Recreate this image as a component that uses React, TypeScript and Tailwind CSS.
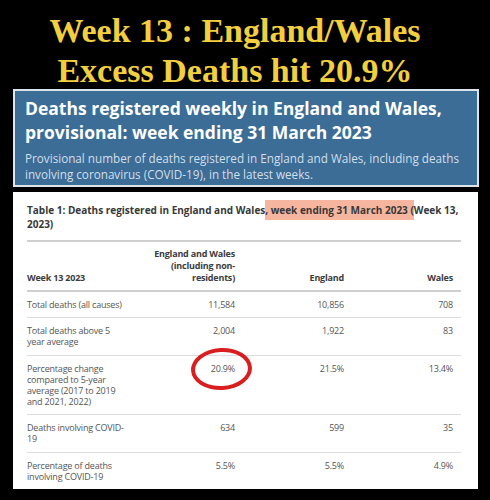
import React from "react";

const rows: { label: string; a: string; b: string; c: string; circle?: boolean }[] = [
  { label: "Total deaths (all causes)", a: "11,584", b: "10,856", c: "708" },
  { label: "Total deaths above 5 year average", a: "2,004", b: "1,922", c: "83" },
  {
    label: "Percentage change compared to 5-year average (2017 to 2019 and 2021, 2022)",
    a: "20.9%",
    b: "21.5%",
    c: "13.4%",
    circle: true,
  },
  { label: "Deaths involving COVID-19", a: "634", b: "599", c: "35" },
  { label: "Percentage of deaths involving COVID-19", a: "5.5%", b: "5.5%", c: "4.9%" },
];

export default function App() {
  return (
    <div className="w-[490px] h-[500px] bg-black flex flex-col overflow-hidden">
      <div
        className="pt-[10.5px] pr-[20px] text-center text-[34px] leading-[40px] font-bold text-[#f2cf3e]"
        style={{ fontFamily: '"Liberation Serif", serif' }}
      >
        <div>Week 13 : England/Wales</div>
        <div>Excess Deaths hit 20.9%</div>
      </div>

      <div
        className="mt-[-1.5px] ml-[13px] mr-[11px] h-[98px] bg-[#3b6d97] border-2 border-[#dde5ec] pl-[10px] pr-[6px] pt-[5px]"
        style={{ fontFamily: '"Open Sans", sans-serif' }}
      >
        <div className="text-white font-bold text-[17.5px] leading-[24px]">
          Deaths registered weekly in England and Wales, provisional: week ending 31 March 2023
        </div>
        <div className="mt-[5.5px] text-[#d3dfe9] text-[11.7px] leading-[16px]">
          Provisional number of deaths registered in England and Wales, including deaths involving
          coronavirus (COVID-19), in the latest weeks.
        </div>
      </div>

      <div
        className="mt-[5px] ml-[13px] mr-[12px] h-[297px] bg-white pl-[14px] pr-[17px] pt-[11px]"
        style={{ fontFamily: '"Open Sans", sans-serif' }}
      >
        <div className="text-[10px] leading-[14px] font-bold text-[#383838]">
          Table 1: Deaths registered in England and Wales
          <span className="bg-[#f6b59f] py-[3px]">, week ending 31 March 2023 (</span>
          Week 13, 2023)
        </div>
        <div className="mt-[8.5px] h-[2px] bg-[#cfcfcf]" />

        <div className="grid grid-cols-[100px_116px_109px_109px] text-[9px] tracking-[-0.2px] leading-[12px] font-bold text-[#3c3c3c] items-end pt-[6.5px] pb-[5.5px]">
          <div>Week 13 2023</div>
          <div className="text-right pr-[8px] pl-[24px]">England and Wales (including non-residents)</div>
          <div className="text-right pr-[8px]">England</div>
          <div className="text-right pr-[8px]">Wales</div>
        </div>
        <div className="h-[2px] bg-[#cfcfcf]" />

        {rows.map((r, i) => (
          <div
            key={i}
            className={
              "grid grid-cols-[100px_116px_109px_109px] text-[9px] tracking-[-0.2px] leading-[11px] text-[#555555] py-[7.25px] " +
              (i < rows.length - 1 ? "border-b border-[#dcdcdc]" : "")
            }
          >
            <div>{r.label}</div>
            <div className="text-right pr-[8px] relative">
              {r.circle && (
                <div className="absolute left-[64px] top-[-15px] w-[61px] h-[42px] rounded-[50%] border-[4.5px] border-[#d81e1e] -rotate-3" />
              )}
              {r.a}
            </div>
            <div className="text-right pr-[8px]">{r.b}</div>
            <div className="text-right pr-[8px]">{r.c}</div>
          </div>
        ))}
      </div>
    </div>
  );
}
